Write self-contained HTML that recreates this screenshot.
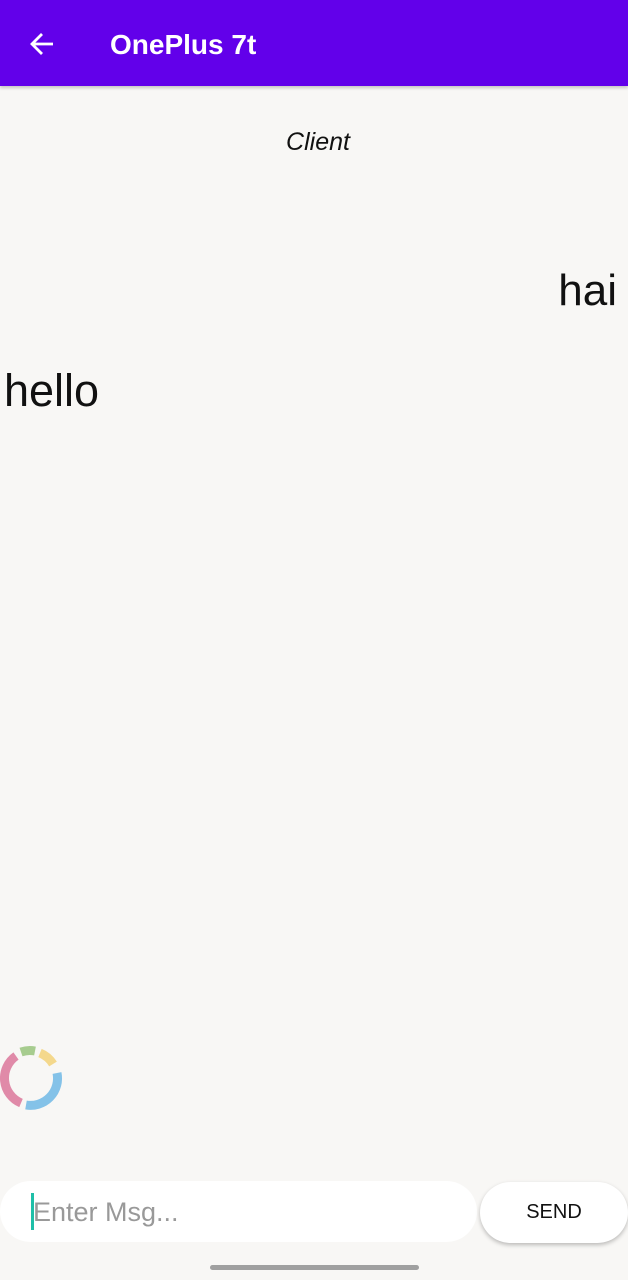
<!DOCTYPE html>
<html><head><meta charset="utf-8"><style>
body{margin:0;width:628px;height:1280px;background:#f8f7f5;position:relative;overflow:hidden;font-family:"Liberation Sans",sans-serif}
.bar{position:absolute;left:0;top:0;width:628px;height:86px;background:#6200ea;box-shadow:0 2px 3px rgba(0,0,0,.2)}
.t{position:absolute;color:#fff;font-size:28px;font-weight:bold;left:110px;top:29px}
.a{position:absolute}
</style></head><body>
<div class="bar"><svg class="a" style="left:28px;top:30px" width="28" height="28" viewBox="0 0 28 28"><path d="M25 14H5M14 4L4 14l10 10" stroke="#fff" stroke-width="2.8" fill="none"/></svg><div class="t">OnePlus 7t</div></div>
<div class="a" style="left:0;width:636px;top:128px;text-align:center;font-style:italic;font-size:25px;color:#111">Client</div>
<div class="a" style="right:11px;top:266px;font-size:44px;color:#111">hai</div>
<div class="a" style="left:4px;top:365px;font-size:45px;color:#111">hello</div>
<svg class="a" style="left:0;top:1045px" width="66" height="70" viewBox="0 0 66 70">
<g fill="none" stroke-width="9" transform="translate(31,33)">
<path d="M-10 25A27 27 0 0 1 -15 -22" stroke="#e08aa8"/>
<path d="M-10 -26A27 27 0 0 1 4 -27" stroke="#a7cc8f"/>
<path d="M9 -25A27 27 0 0 1 22 -14" stroke="#f4d88c"/>
<path d="M26 -5A27 27 0 0 1 -5 27" stroke="#84c2e8"/>
</g></svg>
<div class="a" style="left:0;top:1181px;width:477px;height:61px;background:#fff;border-radius:31px"></div>
<div class="a" style="left:31px;top:1193px;width:3px;height:37px;background:#1fbfa8"></div>
<div class="a" style="left:33px;top:1197px;font-size:27px;color:#999">Enter Msg...</div>
<div class="a" style="left:480px;top:1182px;width:148px;height:61px;background:#fff;border-radius:31px;box-shadow:0 2px 4px rgba(0,0,0,.25);text-align:center;line-height:61px;font-size:20px;color:#111">SEND</div>
<div class="a" style="left:210px;top:1265px;width:209px;height:5px;border-radius:3px;background:#a0a0a0"></div>
</body></html>
